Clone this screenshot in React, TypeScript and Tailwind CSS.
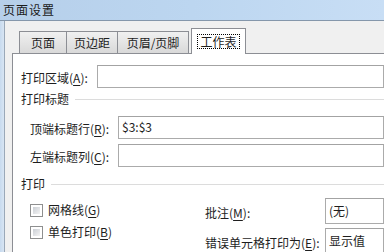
import React from 'react';

const font = { fontFamily: '"Microsoft YaHei", "Noto Sans CJK SC", "Noto Sans", sans-serif' };

// --- Accelerator label, e.g. 打印区域(A):
function Label({ text, hot, tail = ':' }: { text: string; hot: string; tail?: string }) {
  return (
    <span className="whitespace-nowrap text-[12px] leading-[14px] text-[#1e1e1e]">
      {text}(<span className="underline underline-offset-2">{hot}</span>){tail}
    </span>
  );
}

// --- Tab ---
function Tab({ label, active, className }: { label: string; active?: boolean; className?: string }) {
  if (active) {
    return (
      <div className="relative z-10 -mb-px ml-[3px] flex h-[26px] w-[55px] items-start justify-center border border-b-0 border-[#8c8e94] bg-white pt-[5px]">
        <span className="border border-dotted border-black px-[2px] text-[12px] leading-[13px] text-[#1e1e1e]">{label}</span>
      </div>
    );
  }
  return (
    <div className={'-mr-px flex h-[22px] items-center justify-center border border-b-0 border-[#8c8e94] bg-gradient-to-b from-[#f0f0f0] to-[#d9d9d9] text-[12px] text-[#1e1e1e] ' + (className ?? '')}>
      {label}
    </div>
  );
}

// --- Text box ---
function Field({ value, className }: { value?: string; className?: string }) {
  return (
    <div className={'flex h-[23px] flex-1 items-center border border-[#ababab] border-t-[#a3a3a3] bg-white pl-[3px] text-[12px] text-[#1e1e1e] ' + (className ?? '')}>
      {value}
    </div>
  );
}

// --- Group heading with rule ---
function Heading({ text }: { text: string }) {
  return (
    <div className="flex h-[14px] items-center gap-[6px]">
      <span className="text-[12px] leading-[14px] text-[#1e1e1e]">{text}</span>
      <div className="h-px flex-1 bg-[#dcdcdc]" />
    </div>
  );
}

function Check({ text, hot }: { text: string; hot: string }) {
  return (
    <div className="flex h-[22px] items-center gap-[5px]">
      <div className="h-[13px] w-[13px] border border-[#8e8f8f] bg-white p-[2px]">
        <div className="h-full w-full bg-gradient-to-br from-[#cbcfd5] to-[#f4f4f4]" />
      </div>
      <Label text={text} hot={hot} tail="" />
    </div>
  );
}

export default function App() {
  return (
    <div className="flex h-[252px] w-[384px] flex-col overflow-hidden bg-[#f0f0f0]" style={font}>
      {/* title bar */}
      <div className="flex h-[21px] shrink-0 items-center border-b border-[#8597ab] bg-gradient-to-r from-[#b6cfea] via-[#bcd6f0] to-[#c8def5] pl-[3px] text-[12px] tracking-[1px] text-[#1a1a1a]">
        页面设置
      </div>

      <div className="flex flex-1">
        {/* window frame */}
        <div className="w-[5px] border-r border-[#9aa8b8] bg-gradient-to-r from-[#c7daee] to-[#d8e5f3]" />

        {/* client */}
        <div className="flex flex-1 flex-col pl-[7px] pt-[7px]">
          <div className="flex items-end pl-[7px]">
            <Tab label="页面" className="w-[48px]" />
            <Tab label="页边距" className="w-[52px]" />
            <Tab label="页眉/页脚" className="w-[72px]" />
            <Tab label="工作表" active />
          </div>

          <div className="flex flex-1 flex-col border-l border-t border-[#8c8e94] bg-white pl-[8px] pt-[10px]">
            <div className="flex items-center">
              <div className="w-[76px]">
                <Label text="打印区域" hot="A" />
              </div>
              <Field />
            </div>

            <div className="mt-[4px]">
              <Heading text="打印标题" />
            </div>

            <div className="mt-[9px] flex items-center pl-[9px]">
              <div className="w-[88px]">
                <Label text="顶端标题行" hot="R" />
              </div>
              <Field value="$3:$3" />
            </div>
            <div className="mt-[4px] flex items-center pl-[9px]">
              <div className="w-[88px]">
                <Label text="左端标题列" hot="C" />
              </div>
              <Field />
            </div>

            <div className="mt-[10px]">
              <Heading text="打印" />
            </div>

            <div className="mt-[7px] flex">
              <div className="flex w-[184px] flex-col pl-[9px] pt-[1px]">
                <Check text="网格线" hot="G" />
                <Check text="单色打印" hot="B" />
              </div>
              <div className="flex flex-1 flex-col gap-[4px]">
                <div className="flex items-center">
                  <div className="w-[120px]">
                    <Label text="批注" hot="M" />
                  </div>
                  <Field value="(无)" className="h-[26px]" />
                </div>
                <div className="flex items-center">
                  <div className="w-[120px]">
                    <Label text="错误单元格打印为" hot="E" />
                  </div>
                  <Field value="显示值" className="h-[26px]" />
                </div>
              </div>
            </div>
          </div>
        </div>
      </div>
    </div>
  );
}
